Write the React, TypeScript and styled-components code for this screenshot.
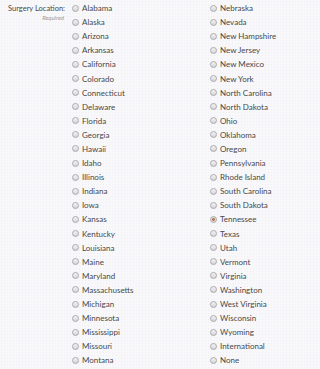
import styled, { createGlobalStyle } from 'styled-components';

const GlobalStyle = createGlobalStyle`
body {
  margin: 0;
  overflow: hidden;
  background-color: #f8f8fa;
  background-image: radial-gradient(rgba(205, 205, 220, 0.22) 0.5px, transparent 0.6px);
  background-size: 3px 3px;
  font-family: Lato, "Liberation Sans", sans-serif;
}
`;

const Field = styled.div`
display: flex;
align-items: flex-start;
padding-top: 1px;
width: 300px;
`;

const LabelBox = styled.div`
width: 65px;
flex-shrink: 0;
text-align: right;
padding-top: 3px;
`;

const LabelText = styled.div`
font-size: 7.5px;
color: #4a4a4a;
line-height: 10px;
`;

const RequiredText = styled.div`
font-size: 6px;
font-style: italic;
color: #9a9a9a;
line-height: 8px;
margin-right: 1px;
`;

const OptionsGrid = styled.div`
display: grid;
grid-template-columns: 138px 1fr;
grid-auto-flow: column;
grid-template-rows: repeat(26, 14.1px);
margin-left: 7px;
flex: 1;
`;

const Option = styled.label`
display: flex;
align-items: center;
gap: 3px;
font-size: 8px;
color: #484848;
white-space: nowrap;
`;

const Radio = styled.span<{ checked: boolean }>`
width: 7px;
height: 7px;
border-radius: 50%;
box-sizing: border-box;
border: 1px solid #aaaaae;
background: ${(props) => props.checked
  ? 'radial-gradient(circle, #b8733e 0 1.1px, #dcdce0 1.6px)'
  : 'linear-gradient(#f4f4f6, #d6d6da)'};
flex-shrink: 0;
`;

const states = [
  'Alabama', 'Alaska', 'Arizona', 'Arkansas', 'California', 'Colorado', 'Connecticut',
  'Delaware', 'Florida', 'Georgia', 'Hawaii', 'Idaho', 'Illinois', 'Indiana', 'Iowa',
  'Kansas', 'Kentucky', 'Louisiana', 'Maine', 'Maryland', 'Massachusetts', 'Michigan',
  'Minnesota', 'Mississippi', 'Missouri', 'Montana',
  'Nebraska', 'Nevada', 'New Hampshire', 'New Jersey', 'New Mexico', 'New York',
  'North Carolina', 'North Dakota', 'Ohio', 'Oklahoma', 'Oregon', 'Pennsylvania',
  'Rhode Island', 'South Carolina', 'South Dakota', 'Tennessee', 'Texas', 'Utah',
  'Vermont', 'Virginia', 'Washington', 'West Virginia', 'Wisconsin', 'Wyoming',
  'International', 'None',
];

const App = () => {
  const selected = 'Tennessee';
  return (
    <>
      <GlobalStyle />
      <Field>
        <LabelBox>
          <LabelText>Surgery Location:</LabelText>
          <RequiredText>Required</RequiredText>
        </LabelBox>
        <OptionsGrid>
          {states.map((name) => (
            <Option key={name}>
              <Radio checked={name === selected} />
              {name}
            </Option>
          ))}
        </OptionsGrid>
      </Field>
    </>
  );
};

export default App;
